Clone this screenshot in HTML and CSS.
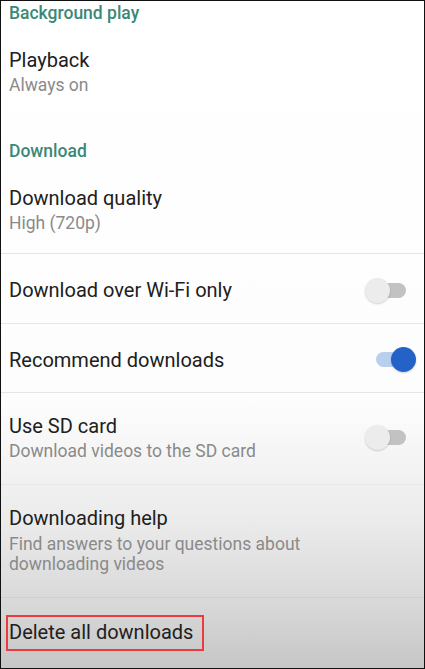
FILE: index.html
```html
<!DOCTYPE html>
<html lang="en">
<head>
    <meta charset="UTF-8">
    <meta name="viewport" content="width=device-width, initial-scale=1.0">
    <title>Settings</title>
    <link rel="stylesheet" href="styles.css">
</head>
<body>

<div class="screen">
    <div class="group-title first">Background play</div>
    <div class="setting">
        <div class="setting-text">
            <div class="title">Playback</div>
            <div class="summary">Always on</div>
        </div>
    </div>

    <div class="group-title">Download</div>
    <div class="setting divided">
        <div class="setting-text">
            <div class="title">Download quality</div>
            <div class="summary">High (720p)</div>
        </div>
    </div>

    <div class="setting single divided">
        <div class="setting-text">
            <div class="title">Download over Wi-Fi only</div>
        </div>
        <div class="toggle"><span class="track"></span><span class="thumb"></span></div>
    </div>

    <div class="setting single divided">
        <div class="setting-text">
            <div class="title">Recommend downloads</div>
        </div>
        <div class="toggle on"><span class="track"></span><span class="thumb"></span></div>
    </div>

    <div class="setting sd divided">
        <div class="setting-text">
            <div class="title">Use SD card</div>
            <div class="summary">Download videos to the SD card</div>
        </div>
        <div class="toggle"><span class="track"></span><span class="thumb"></span></div>
    </div>

    <div class="setting help divided">
        <div class="setting-text">
            <div class="title">Downloading help</div>
            <div class="summary">Find answers to your questions about<br>downloading videos</div>
        </div>
    </div>

    <div class="setting last">
        <span class="highlight">Delete all downloads</span>
    </div>
</div>

</body>
</html>
```

FILE: styles.css
```css
body {
    margin: 0;
    font-family: Roboto, "Noto Sans", sans-serif;
    background: #fff;
}

.screen {
    width: 425px;
    height: 669px;
    box-sizing: border-box;
    border: 1px solid #111;
    overflow: hidden;
    background: linear-gradient(to bottom, #ffffff 0px, #fdfdfd 400px, #ebebeb 520px, #d9d9d9 600px, #c6c6c6 668px);
}

.group-title {
    padding: 26px 8px 0;
    font-size: 17.5px;
    line-height: 20px;
    font-weight: 500;
    color: #3b8877;
}

.group-title.first {
    padding-top: 2px;
}

.setting {
    display: flex;
    align-items: center;
    justify-content: space-between;
    padding: 25px 8px 20px;
}

.setting.divided {
    border-bottom: 1px solid #e6e6e6;
}

.setting.single {
    padding: 23.5px 8px 20px;
}

.setting.sd {
    padding: 21px 8px 23px;
}

.setting.help {
    padding: 21px 8px 23px;
    border-bottom-color: #cfcfcf;
}

.setting.last {
    padding: 17px 8px 0 5px;
}

.title {
    font-size: 20px;
    line-height: 24px;
    color: #202020;
}

.summary {
    margin-top: 3px;
    font-size: 17.5px;
    line-height: 20px;
    color: #8a8a8a;
}

.help .summary {
    margin-top: 4px;
}

.highlight {
    display: inline-block;
    border: 2px solid #ee3a3e;
    padding: 3px 9px 5px 1px;
    font-size: 20px;
    line-height: 24px;
    color: #202020;
}

/* switch */
.toggle {
    position: relative;
    width: 51px;
    height: 25px;
    flex-shrink: 0;
}

.toggle .track {
    position: absolute;
    left: 11px;
    top: 5px;
    width: 30px;
    height: 15px;
    border-radius: 8px;
    background: #c2c2c2;
}

.toggle .thumb {
    position: absolute;
    left: 0;
    top: 0;
    width: 25px;
    height: 25px;
    border-radius: 50%;
    background: #ececec;
    box-shadow: 0 1px 2px rgba(0, 0, 0, 0.18);
}

.toggle.on .track {
    background: #b9cfee;
}

.toggle.on .thumb {
    left: 26px;
    background: #2462c8;
}
```
